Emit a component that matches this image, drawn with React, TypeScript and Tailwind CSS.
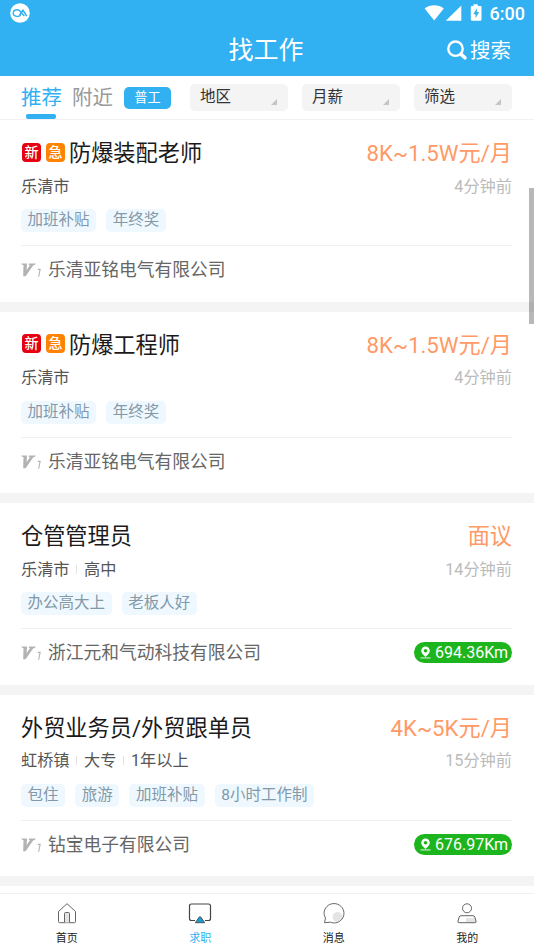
import type { ReactNode } from 'react';

type Job = {
  title: string;
  hot?: boolean;
  salary: string;
  info: string[];
  time: string;
  tags: string[];
  company: string;
  distance?: string;
};

const jobs: Job[] = [
  { title: '防爆装配老师', hot: true, salary: '8K~1.5W元/月', info: ['乐清市'], time: '4分钟前', tags: ['加班补贴', '年终奖'], company: '乐清亚铭电气有限公司' },
  { title: '防爆工程师', hot: true, salary: '8K~1.5W元/月', info: ['乐清市'], time: '4分钟前', tags: ['加班补贴', '年终奖'], company: '乐清亚铭电气有限公司' },
  { title: '仓管管理员', salary: '面议', info: ['乐清市', '高中'], time: '14分钟前', tags: ['办公高大上', '老板人好'], company: '浙江元和气动科技有限公司', distance: '694.36Km' },
  { title: '外贸业务员/外贸跟单员', salary: '4K~5K元/月', info: ['虹桥镇', '大专', '1年以上'], time: '15分钟前', tags: ['包住', '旅游', '加班补贴', '8小时工作制'], company: '钻宝电子有限公司', distance: '676.97Km' },
];

const filters = ['地区', '月薪', '筛选'];

function StatusBar() {
  return (
    <div className="flex h-[27px] items-center pl-[10px] pr-[9px]">
      {/* carrier logo */}
      <svg className="mb-px" width="20" height="20" viewBox="0 0 20 20" fill="none">
        <circle cx="10" cy="10" r="9.8" fill="#fff" />
        <path d="M10.6 12.3C9.500 13.300 8.200 13.700 6.600 13.400 4.500 13 3.100 11.700 3.200 10c.1-1.800 1.800-3.200 4-3.200 2.500 0 3.800 2 5.200 4.200l1.900 2" stroke="#31b0f2" strokeWidth="1.4" />
        <path d="M9.7 12.2l3.2-5.1 3.8 6.1" stroke="#31b0f2" strokeWidth="1.6" strokeLinejoin="round" />
      </svg>
      <div className="ml-auto flex items-center">
        <svg className="mb-px" width="60" height="20" viewBox="0 0 60 20" fill="#fff">
          <path d="M0.6 5.6C6 1.200 14.400 1.200 19.800 5.600L10.200 17.400z" />
          <path d="M37.300 2.600V17.700H21.800z" />
          <path fillRule="evenodd" d="M49.500 1.300h4.300v1.700h2.600q1.100 0 1.100 1.100v12.500q0 1.100-1.100 1.100h-8.500q-1.100 0-1.100-1.100V4.100q0-1.100 1.100-1.100h1.600zM52.900 5.200l-3.600 6h2.200v4l3.600-6.200h-2.200z" />
        </svg>
        <span className="ml-[6px] text-[18px] font-medium leading-[20px] text-white">6:00</span>
      </div>
    </div>
  );
}

function Header() {
  return (
    <header className="h-[76px] bg-[#31b0f2]">
      <StatusBar />
      <div className="relative flex h-[49px] items-start justify-center text-white">
        <h1 className="pr-[2px] text-[25px] leading-[48px]">找工作</h1>
        <div className="absolute right-[23px] top-0 flex h-[48px] items-center">
          <svg className="mb-[2px]" width="20" height="20" viewBox="0 0 20 20" fill="none" stroke="#fff">
            <circle cx="8.500" cy="8.700" r="7.200" strokeWidth="2.400" />
            <path d="M13.900 14.100l4 3.700" strokeWidth="3.600" strokeLinecap="round" />
          </svg>
          <span className="ml-[3px] text-[20.500px] leading-[48px]">搜索</span>
        </div>
      </div>
    </header>
  );
}

function FilterBar() {
  return (
    <div className="flex h-[44px] border-b border-[#f2f2f2] bg-white pl-[21px]">
      <div className="relative text-[20.500px] leading-[44px] text-[#31b0f2]">
        推荐
        <span className="absolute bottom-0 left-[5px] h-[5px] w-[30px] rounded-[2px] bg-[#31b0f2]" />
      </div>
      <div className="ml-[10px] text-[20.500px] leading-[44px] text-[#999]">附近</div>
      <div className="ml-[11px] mt-[11px] h-[22px] w-[47px] rounded-[5px] bg-[#31b0f2] text-center text-[13.200px] leading-[22px] text-white">普工</div>
      <div className="ml-[19px] mt-[8px] flex gap-[14px]">
        {filters.map((f) => (
          <div key={f} className="flex h-[27px] w-[98px] items-end justify-between rounded-[5px] bg-[#f4f4f4] pl-[10px] pr-[11px] text-[#333]">
            <span className="text-[15.500px] leading-[27px]">{f}</span>
            <svg className="mb-[6px]" width="6" height="6" viewBox="0 0 6 6">
              <path d="M6 0v6H0z" fill="#c4c4c4" />
            </svg>
          </div>
        ))}
      </div>
    </div>
  );
}

function VipMark() {
  return (
    <svg width="20" height="16" viewBox="0 0 20 16" fill="#b3b3b3">
      <path d="M0.300 1.400h5.700l-.4 6.800 3.400-5.300-1.500-.2.800-1.300h6.500L13.700 3l-1.400.2L4.600 14.200H2.200L2.500 3 1 2.700z" />
      <path d="M16.900 6.800h2.900L18.200 14.700h-1.100l1.300-6.800h-1.700z" />
    </svg>
  );
}

function Distance({ value }: { value: string }) {
  return (
    <div className="mb-px ml-auto flex h-[21px] w-[98px] items-center rounded-full bg-[#1db51d] pl-[6px] text-white">
      <svg width="11" height="13" viewBox="0 0 11 13" fill="#fff">
        <path fillRule="evenodd" d="M5.500.400a4.300 4.300 0 0 1 4.300 4.300c0 2.200-2.300 4.300-4.300 6.300-2-2-4.300-4.100-4.300-6.300A4.300 4.300 0 0 1 5.500.400zM5.500 3a1.800 1.800 0 1 0 0 3.600A1.800 1.800 0 0 0 5.500 3z" />
        <path d="M.5 11.500h10v.9H.500z" />
      </svg>
      <span className="ml-[4px] text-[16px] leading-[21px]">{value}</span>
    </div>
  );
}

function JobCard({ job }: { job: Job }) {
  return (
    <article className="h-[191.500px] shrink-0 border-b-[10px] border-[#f4f4f4] bg-white pl-[21px] pr-[22px] pt-[17px]">
      <div className="flex h-[31px] items-center text-[22.200px] leading-[32px]">
        {job.hot && (
          <div className="mb-px mr-[4px] flex gap-[5px] pl-[1px] text-center text-[14px] font-medium leading-[18px] text-white">
            <span className="size-[19px] rounded-[4px] bg-[#e60012]">新</span>
            <span className="size-[19px] rounded-[4px] bg-[#ff8200]">急</span>
          </div>
        )}
        <h2 className="pt-px text-[#1a1a1a]">{job.title}</h2>
        <span className="ml-auto pt-px text-[#ff9966]">{job.salary}</span>
      </div>
      <div className="mt-[7px] flex h-[22px] items-center text-[16.200px] leading-[23px] text-[#555]">
        {job.info.map((item, i) => (
          <span key={item} className="flex items-center">
            {i > 0 && <i className="ml-[6.500px] mr-[7px] h-[9px] w-px bg-[#e2e2e2]" />}
            {item}
          </span>
        ))}
        <span className="ml-auto text-[#bbb]">{job.time}</span>
      </div>
      <div className="mt-[12px] flex h-[23px] gap-[10px]">
        {job.tags.map((tag) => (
          <span key={tag} className="rounded-[5px] bg-[#eff8ff] px-[6.600px] text-[15.500px] leading-[23px] text-[#8299a8]">{tag}</span>
        ))}
      </div>
      <div className="mt-[13px] flex h-[49px] items-center border-t border-[#f0f0f0]">
        <VipMark />
        <span className="ml-[7px] text-[17.750px] leading-[24px] text-[#666]">{job.company}</span>
        {job.distance && <Distance value={job.distance} />}
      </div>
    </article>
  );
}

function NavItem({ label, active, children }: { label: string; active?: boolean; children: ReactNode }) {
  return (
    <div className="flex flex-1 flex-col items-center pt-[7px]">
      <svg width="24" height="24" viewBox="0 0 24 24" fill="none" stroke="#666" strokeWidth="1">
        {children}
      </svg>
      <span className={active ? 'mt-[6px] text-[11px] leading-[16px] text-[#31b0f2]' : 'mt-[6px] text-[11px] leading-[16px] text-[#222]'}>{label}</span>
    </div>
  );
}

function BottomNav() {
  return (
    <nav className="flex h-[57px] shrink-0 border-t border-[#f0f0f0] bg-white">
      <NavItem label="首页">
        <path d="M3.500 10.500L12 2.700l8.500 7.800v10.200q0 1-1 1h-15q-1 0-1-1z" strokeLinejoin="round" />
        <path d="M9.500 21.500v-9q0-1 1-1h3q1 0 1 1v9" fill="#e4e4e4" />
      </NavItem>
      <NavItem label="求职" active>
        <path d="M7 19.500H3.500Q1.500 19.500 1.500 17.500V5q0-2 2-2h17q2 0 2 2v12.500q0 2-2 2H17" stroke="#444" strokeWidth="1.200" />
        <path d="M7.400 21.700l3.800-5.600q.8-1 1.600 0l3.900 5.600z" fill="#169fd5" stroke="#555" strokeLinejoin="round" />
      </NavItem>
      <NavItem label="消息">
        <circle cx="15.500" cy="16" r="5" fill="#e4e4e4" stroke="none" />
        <path d="M2.500 21.700l1-4.800C.700 12.500 2.200 7 6.600 4.100 11 1.300 17.200 2.500 20.200 6.700c2.800 4 2.200 9.400-1.400 12.700-2.800 2.600-6.900 3.200-10.300 1.800z" strokeLinejoin="round" />
      </NavItem>
      <NavItem label="我的">
        <path d="M11 17h10v4.500H11z" fill="#e4e4e4" stroke="none" />
        <circle cx="12" cy="7.300" r="4.500" />
        <path d="M6 14.700h12q1.300 0 1.800 1.300l1.200 4q.5 1.700-1.200 1.700H4.200Q2.500 21.700 3 20l1.200-4q.5-1.300 1.800-1.300z" />
      </NavItem>
    </nav>
  );
}

export default function App() {
  return (
    <div
      lang="zh-CN"
      className="relative flex h-[950px] w-[534px] flex-col overflow-hidden bg-white font-['Roboto','Noto_Sans_CJK_SC',sans-serif]"
    >
      <Header />
      <FilterBar />
      <main className="flex min-h-0 flex-1 flex-col overflow-hidden">
        {jobs.map((job, i) => (
          <JobCard key={i} job={job} />
        ))}
      </main>
      <BottomNav />
      {/* scroll thumb */}
      <div className="absolute right-0 top-[188px] h-[136px] w-[5px] bg-black/28" />
    </div>
  );
}
